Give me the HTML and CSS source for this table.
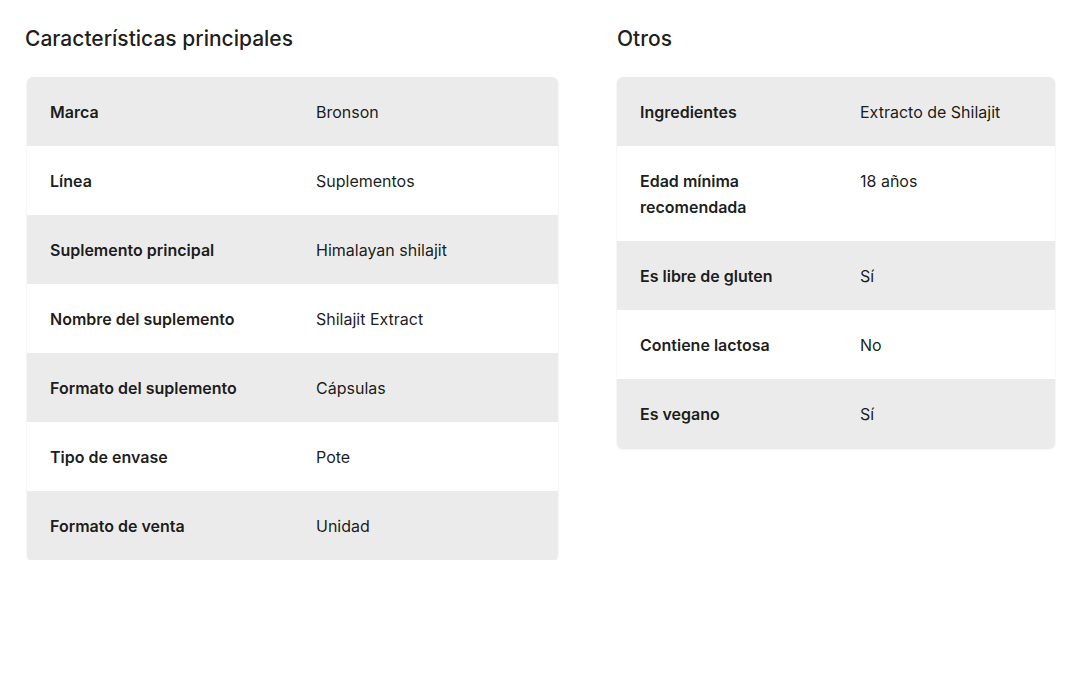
FILE: index.html
```html
<!DOCTYPE html>
<html lang="es">
<head>
<meta charset="utf-8">
<title>Características</title>
<link rel="stylesheet" href="styles.css">
</head>
<body>
<div class="page">
  <section class="group group-main">
    <h2 class="title">Características principales</h2>
    <div class="table">
      <div class="row"><div class="label">Marca</div><div class="value">Bronson</div></div>
      <div class="row"><div class="label">Línea</div><div class="value">Suplementos</div></div>
      <div class="row"><div class="label">Suplemento principal</div><div class="value">Himalayan shilajit</div></div>
      <div class="row"><div class="label">Nombre del suplemento</div><div class="value">Shilajit Extract</div></div>
      <div class="row"><div class="label">Formato del suplemento</div><div class="value">Cápsulas</div></div>
      <div class="row"><div class="label">Tipo de envase</div><div class="value">Pote</div></div>
      <div class="row"><div class="label">Formato de venta</div><div class="value">Unidad</div></div>
    </div>
  </section>
  <section class="group group-other">
    <h2 class="title">Otros</h2>
    <div class="table">
      <div class="row"><div class="label">Ingredientes</div><div class="value">Extracto de Shilajit</div></div>
      <div class="row"><div class="label">Edad mínima recomendada</div><div class="value">18 años</div></div>
      <div class="row"><div class="label">Es libre de gluten</div><div class="value">Sí</div></div>
      <div class="row"><div class="label">Contiene lactosa</div><div class="value">No</div></div>
      <div class="row"><div class="label">Es vegano</div><div class="value">Sí</div></div>
    </div>
  </section>
</div>
</body>
</html>
```
FILE: styles.css
```css
* { box-sizing: border-box; }
html, body { margin: 0; padding: 0; background: #fff; }
body {
  font-family: Inter, "Open Sans", "Liberation Sans", sans-serif;
  color: rgba(0, 0, 0, 0.9);
}
.page {
  display: flex;
  align-items: flex-start;
  gap: 59px;
  padding: 26px 0 0 27px;
}
.group-main { width: 531px; }
.group-other { width: 438px; }
.title {
  margin: 0;
  font-size: 21px;
  line-height: 26px;
  font-weight: 500;
  color: rgba(0, 0, 0, 0.9);
}
.group-main .title { margin-left: -2px; }
.table {
  margin-top: 25px;
  border-radius: 6px;
  overflow: hidden;
  box-shadow: 0 1px 2px rgba(0, 0, 0, 0.12);
}
.row {
  display: grid;
  padding: 21.5px 23px;
  font-size: 16px;
  line-height: 26px;
}
.group-main .row { grid-template-columns: 266px 1fr; }
.group-other .row { grid-template-columns: 220px 1fr; }
.row:nth-child(odd) { background: #ebebeb; }
.row:nth-child(even) { background: #fff; }
.label { font-weight: 600; padding-right: 24px; }
.value { font-weight: 400; }
```
